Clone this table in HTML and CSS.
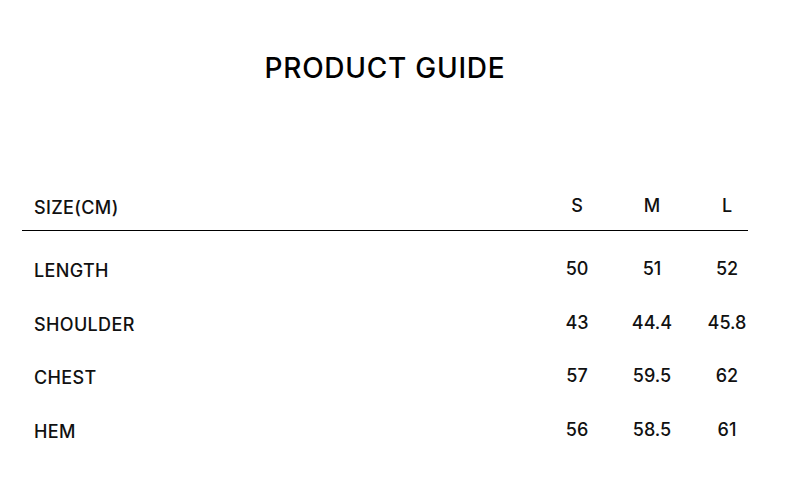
FILE: index.html
```html
<!DOCTYPE html>
<html>
<head>
<meta charset="utf-8">
<link rel="stylesheet" href="styles.css">
</head>
<body>
<div class="page">
  <h1 class="title">PRODUCT GUIDE</h1>
  <div class="table">
    <div class="row head">
      <div class="label">SIZE(CM)</div>
      <div class="val">S</div>
      <div class="val">M</div>
      <div class="val">L</div>
    </div>
    <div class="row first">
      <div class="label">LENGTH</div>
      <div class="val">50</div>
      <div class="val">51</div>
      <div class="val">52</div>
    </div>
    <div class="row">
      <div class="label">SHOULDER</div>
      <div class="val">43</div>
      <div class="val">44.4</div>
      <div class="val">45.8</div>
    </div>
    <div class="row">
      <div class="label">CHEST</div>
      <div class="val">57</div>
      <div class="val">59.5</div>
      <div class="val">62</div>
    </div>
    <div class="row">
      <div class="label">HEM</div>
      <div class="val">56</div>
      <div class="val">58.5</div>
      <div class="val">61</div>
    </div>
  </div>
</div>
</body>
</html>
```
FILE: styles.css
```css
html, body {
  margin: 0;
  padding: 0;
  background: #fff;
}
body {
  font-family: Inter, "Noto Sans", sans-serif;
  color: #111;
}
.page {
  width: 770px;
  box-sizing: border-box;
  padding: 0 22px;
}
.title {
  margin: 0;
  padding-top: 52px;
  height: 150px;
  box-sizing: border-box;
  text-align: center;
  font-weight: 500;
  font-size: 28px;
  letter-spacing: 0.75px;
  line-height: 32px;
  color: #000;
}
.table {
  display: flex;
  flex-direction: column;
}
.row {
  display: grid;
  grid-template-columns: 1fr 42px 42px 42px;
  column-gap: 33px;
  align-items: start;
  height: 53.5px;
  font-size: 18px;
  font-weight: 500;
  line-height: 20px;
}
.row.head {
  height: 81px;
  padding-top: 46px;
  box-sizing: border-box;
  border-bottom: 1px solid #000;
}
.row.first {
  padding-top: 28px;
  height: 81.5px;
  box-sizing: border-box;
}
.label {
  padding-left: 12px;
  padding-top: 2px;
  letter-spacing: 0.35px;
  white-space: nowrap;
}
.val {
  text-align: center;
  white-space: nowrap;
}
```
